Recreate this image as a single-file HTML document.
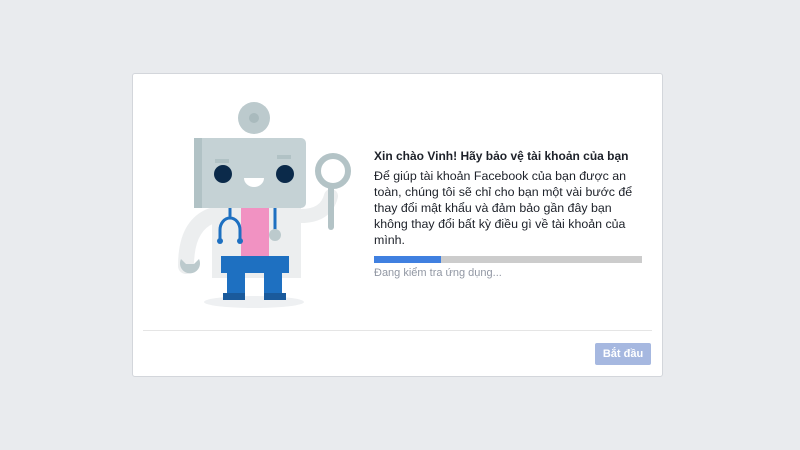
<!DOCTYPE html>
<html><head><meta charset="utf-8"><style>
body{margin:0;width:800px;height:450px;background:#e9ebee;font-family:"Liberation Sans",Arial,sans-serif;position:relative;overflow:hidden}
.card{position:absolute;left:132px;top:73px;width:529px;height:302px;background:#fff;border:1px solid #d3d6db;border-radius:3px}
.sep{position:absolute;left:10px;right:10px;top:256px;border-top:1px solid #e5e5e5}
h1{position:absolute;left:241px;top:75px;margin:0;font-size:12px;font-weight:bold;color:#1d2129}
p{position:absolute;left:241px;top:94px;margin:0;width:262px;font-size:12.4px;line-height:16px;color:#1d2129}
.bar{position:absolute;left:241px;top:182px;width:268px;height:7px;background:#ccc}
.bar div{width:67px;height:7px;background:#4080e0}
.st{position:absolute;left:241px;top:193px;font-size:11px;color:#9197a3}
.btn{position:absolute;left:462px;top:269px;width:56px;height:22px;background:#a6b8e0;border-radius:2px;color:#fff;font-size:11px;font-weight:bold;text-align:center;line-height:22px}
</style></head><body>
<div class="card">
<svg style="position:absolute;left:28px;top:17px" width="200" height="230" viewBox="160 90 200 230">
<ellipse cx="253" cy="301" rx="50" ry="6" fill="#eef0f2"/>
<circle cx="253" cy="117" r="16" fill="#bccacd"/><circle cx="253" cy="117" r="5" fill="#a9babd"/>
<path d="M210 215 Q185 225 185 265" stroke="#eceeef" stroke-width="16" fill="none" stroke-linecap="round"/>
<path d="M180 258 a10 10 0 1 0 18 0 l-5 5 h-8 z" fill="#bccacd"/>
<path d="M300 215 Q325 215 330 195" stroke="#eceeef" stroke-width="14" fill="none" stroke-linecap="round"/>
<rect x="211" y="205" width="89" height="72" fill="#eceeef"/>
<rect x="240" y="205" width="28" height="60" fill="#f192c2"/>
<rect x="220" y="255" width="68" height="17" fill="#1e70c1"/>
<rect x="226" y="270" width="18" height="25" fill="#1e70c1"/>
<rect x="263" y="270" width="18" height="25" fill="#1e70c1"/>
<rect x="222" y="292" width="22" height="7" fill="#1a5a9c"/>
<rect x="263" y="292" width="22" height="7" fill="#1a5a9c"/>
<path d="M229 205 v12 a10 12 0 0 0 -10 12 v10 M229 217 a10 12 0 0 1 10 12 v10" stroke="#1e70c1" stroke-width="3" fill="none"/>
<circle cx="219" cy="240" r="3" fill="#1e70c1"/><circle cx="239" cy="240" r="3" fill="#1e70c1"/>
<path d="M274 205 v24" stroke="#1e70c1" stroke-width="3"/>
<circle cx="274" cy="234" r="6" fill="#bccacd"/>
<circle cx="332" cy="170" r="15" fill="none" stroke="#b3c3c6" stroke-width="6"/>
<path d="M330 186 v40" stroke="#b3c3c6" stroke-width="6" stroke-linecap="round"/>
<rect x="193" y="137" width="112" height="70" rx="5" fill="#c5d2d5"/>
<rect x="193" y="137" width="8" height="70" fill="#b1c2c5"/>
<rect x="214" y="158" width="14" height="4" fill="#b1c2c5"/><rect x="276" y="154" width="14" height="4" fill="#b1c2c5"/>
<circle cx="222" cy="173" r="9" fill="#0b2a4a"/><circle cx="284" cy="173" r="9" fill="#0b2a4a"/>
<path d="M243 177 a10 9 0 0 0 20 0 z" fill="#fff"/>
</svg>
<h1>Xin chào Vinh! Hãy bảo vệ tài khoản của bạn</h1>
<p>Để giúp tài khoản Facebook của bạn được an toàn, chúng tôi sẽ chỉ cho bạn một vài bước để thay đổi mật khẩu và đảm bảo gần đây bạn không thay đổi bất kỳ điều gì về tài khoản của mình.</p>
<div class="bar"><div></div></div>
<div class="st">Đang kiểm tra ứng dụng...</div>
<div class="sep"></div>
<div class="btn">Bắt đầu</div>
</div>
</body></html>
